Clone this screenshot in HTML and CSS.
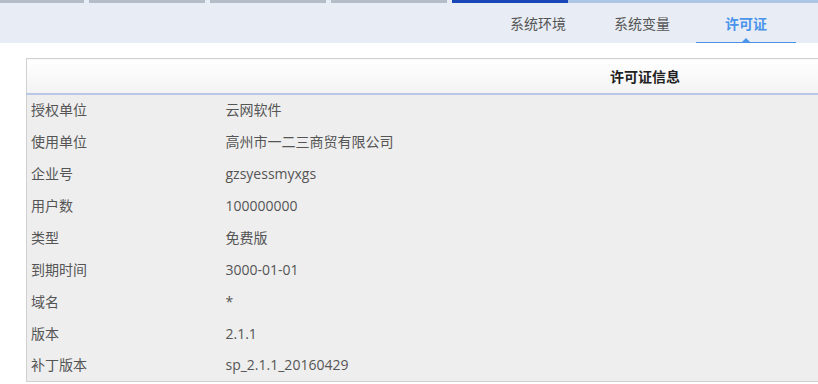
FILE: index.html
```html
<!DOCTYPE html>
<html lang="zh-CN">
<head>
  <meta charset="UTF-8">
  <title>许可证信息</title>
  <link rel="stylesheet" href="styles.css">
</head>
<body>
  <div class="topbar">
    <span class="seg seg-1"></span>
    <span class="seg seg-2"></span>
    <span class="seg seg-3"></span>
    <span class="seg seg-4"></span>
    <span class="seg seg-5"></span>
    <span class="seg seg-rest"></span>
  </div>

  <div class="tabs">
    <a class="tab">系统环境</a>
    <a class="tab">系统变量</a>
    <a class="tab active">许可证</a>
  </div>

  <div class="content">
    <table class="info">
      <thead>
        <tr>
          <th colspan="2">许可证信息</th>
        </tr>
      </thead>
      <tbody>
        <tr><td class="label">授权单位</td><td>云网软件</td></tr>
        <tr><td class="label">使用单位</td><td>高州市一二三商贸有限公司</td></tr>
        <tr><td class="label">企业号</td><td>gzsyessmyxgs</td></tr>
        <tr><td class="label">用户数</td><td>100000000</td></tr>
        <tr><td class="label">类型</td><td>免费版</td></tr>
        <tr><td class="label">到期时间</td><td>3000-01-01</td></tr>
        <tr><td class="label">域名</td><td>*</td></tr>
        <tr><td class="label">版本</td><td>2.1.1</td></tr>
        <tr><td class="label">补丁版本</td><td>sp_2.1.1_20160429</td></tr>
      </tbody>
    </table>
  </div>
</body>
</html>
```

FILE: styles.css
```css
html, body {
  margin: 0;
  padding: 0;
  overflow: hidden;
}

body {
  font-family: 'Open Sans', 'Noto Sans CJK SC', sans-serif;
  font-size: 14px;
  color: #555;
  background: #fff;
  width: 818px;
  height: 384px;
}

/* top progress-like strip */
.topbar {
  display: flex;
  height: 3px;
  background: #e8edf5;
}

.seg {
  height: 3px;
  margin-right: 5px;
  background: #b4bcc8;
}

.seg-1 { width: 84px; }
.seg-2 { width: 116px; }
.seg-3 { width: 116px; }
.seg-4 { width: 116px; }
.seg-5 { width: 116px; background: #1a47b8; margin-right: 0; }
.seg-rest { flex: 1; background: #adc6e6; margin-right: 0; }

/* tabs */
.tabs {
  display: flex;
  justify-content: flex-end;
  height: 40px;
  padding-right: 20px;
  background: #e8edf5;
}

.tab {
  position: relative;
  width: 104px;
  line-height: 40px;
  text-align: center;
  color: #555;
  font-family: 'Noto Sans CJK SC', sans-serif;
  font-size: 14px;
}

.tab.active {
  color: #4a94ea;
  font-weight: bold;
  border-bottom: 1px solid #4a94ea;
  height: 39px;
  width: 100px;
  margin-left: 2px;
  margin-right: 2px;
}

.tab.active::after {
  content: '';
  position: absolute;
  left: 50%;
  bottom: 0;
  margin-left: -4px;
  border: 4px solid transparent;
  border-bottom-color: #4a94ea;
  border-top-width: 0;
}

/* table */
.content {
  padding: 15px 0 0 26px;
}

.info {
  width: 1238px;
  border-collapse: collapse;
  border: 1px solid #d0d0d0;
}

.info th {
  box-sizing: border-box;
  height: 35px;
  padding: 0;
  font-family: 'Noto Sans CJK SC', sans-serif;
  font-size: 14px;
  font-weight: bold;
  color: #222;
  background: linear-gradient(#ffffff, #f3f3f3);
  border-bottom: 2px solid #b9c7e6;
}

.info td {
  box-sizing: border-box;
  height: 32px;
  padding: 0 0 0 4px;
  line-height: 18px;
  background: #eeeeee;
  font-family: 'Open Sans', 'Noto Sans CJK SC', sans-serif;
  color: #555;
}

.info td.label {
  width: 195px;
}
```
